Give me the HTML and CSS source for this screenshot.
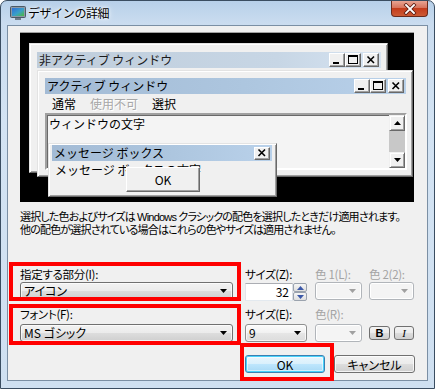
FILE: index.html
```html
<!DOCTYPE html>
<html lang="ja">
<head>
<meta charset="utf-8">
<title>デザインの詳細</title>
<link rel="stylesheet" href="styles.css">
</head>
<body>
<div class="win">
  <div class="titlebar">
    <svg class="appicon" width="16" height="16" viewBox="0 0 16 16">
      <defs><linearGradient id="scr" x1="0" y1="0" x2="1" y2="1"><stop offset="0" stop-color="#2f6fd6"/><stop offset="0.55" stop-color="#3aa0c8"/><stop offset="1" stop-color="#4cbb3c"/></linearGradient></defs>
      <rect x="0.5" y="1.5" width="15" height="11" rx="1" fill="#8c99a6" stroke="#4b5966"/>
      <rect x="2" y="3" width="12" height="8" fill="url(#scr)"/>
      <rect x="5" y="13" width="6" height="2" fill="#6f7c88"/>
    </svg>
    <span class="title">デザインの詳細</span>
    <div class="closebtn">
      <svg width="14" height="12" viewBox="0 0 14 12"><path d="M3 2 L11 10 M11 2 L3 10" stroke="#5a1a10" stroke-width="3.4" stroke-linecap="square"/><path d="M3 2 L11 10 M11 2 L3 10" stroke="#fff" stroke-width="1.8" stroke-linecap="square"/></svg>
    </div>
  </div>
  <div class="client">
    <div class="preview">
      <div class="cw cw-inactive">
        <div class="cap cap-i">
          <span class="captext">非アクティブ ウィンドウ</span>
          <div class="capbtns">
            <div class="cb"><svg width="14" height="12" viewBox="0 0 14 12"><rect x="3" y="8" width="6" height="2"/></svg></div>
            <div class="cb"><svg width="14" height="12" viewBox="0 0 14 12"><rect x="2.5" y="1.5" width="9" height="8" fill="none" stroke="#000"/><rect x="2" y="1" width="10" height="2"/></svg></div>
            <div class="cb cb-x"><svg width="14" height="12" viewBox="0 0 14 12"><path d="M3.5 2.5 L10 9 M10 2.5 L3.5 9" stroke="#000" stroke-width="1.6"/></svg></div>
          </div>
        </div>
      </div>
      <div class="cw cw-active">
        <div class="cap cap-a">
          <span class="captext">アクティブ ウィンドウ</span>
          <div class="capbtns">
            <div class="cb"><svg width="14" height="12" viewBox="0 0 14 12"><rect x="3" y="8" width="6" height="2"/></svg></div>
            <div class="cb"><svg width="14" height="12" viewBox="0 0 14 12"><rect x="2.5" y="1.5" width="9" height="8" fill="none" stroke="#000"/><rect x="2" y="1" width="10" height="2"/></svg></div>
            <div class="cb cb-x"><svg width="14" height="12" viewBox="0 0 14 12"><path d="M3.5 2.5 L10 9 M10 2.5 L3.5 9" stroke="#000" stroke-width="1.6"/></svg></div>
          </div>
        </div>
        <div class="menu">
          <span>通常</span>
          <span class="grayed">使用不可</span>
          <span>選択</span>
        </div>
        <div class="textarea">
          <div class="tatext">ウィンドウの文字</div>
          <div class="sbar">
            <div class="sbtn"><svg width="7" height="4" viewBox="0 0 7 4"><path d="M3.5 0 L7 4 L0 4 Z"/></svg></div>
            <div class="strack"></div>
            <div class="sbtn"><svg width="7" height="4" viewBox="0 0 7 4"><path d="M0 0 L7 0 L3.5 4 Z"/></svg></div>
          </div>
        </div>
      </div>
      <div class="cw msgbox">
        <div class="cap cap-a">
          <span class="captext">メッセージ ボックス</span>
          <div class="capbtns">
            <div class="cb cb-x cb-m"><svg width="14" height="10" viewBox="0 0 14 10"><path d="M3.5 1.5 L10 8 M10 1.5 L3.5 8" stroke="#000" stroke-width="1.6"/></svg></div>
          </div>
        </div>
        <div class="msgbody">
          <div class="msgtext">メッセージ ボックスの文字</div>
          <div class="msgok">OK</div>
        </div>
      </div>
    </div>

    <p class="desc">選択した色およびサイズは Windows クラシックの配色を選択したときだけ適用されます。<br>他の配色が選択されている場合はこれらの色やサイズは適用されません。</p>

    <div class="form">
      <div class="lbl">指定する部分(I):</div>
      <div class="lbl">サイズ(Z):</div>
      <div class="lbl dim">色 1(L):</div>
      <div class="lbl dim">色 2(2):</div>

      <div class="combo wide"><span>アイコン</span><svg class="arr" width="7" height="4" viewBox="0 0 7 4"><path d="M0 0 L7 0 L3.5 4 Z"/></svg></div>
      <div class="spin">
        <div class="spinbox">32</div>
        <div class="spinbtns">
          <div class="sp"><svg width="7" height="4" viewBox="0 0 7 4"><path d="M3.5 0 L7 4 L0 4 Z" fill="#3b58a8"/></svg></div>
          <div class="sp"><svg width="7" height="4" viewBox="0 0 7 4"><path d="M0 0 L7 0 L3.5 4 Z" fill="#3b58a8"/></svg></div>
        </div>
      </div>
      <div class="combo small dis"><span></span><svg class="arr" width="7" height="4" viewBox="0 0 7 4"><path d="M0 0 L7 0 L3.5 4 Z"/></svg></div>
      <div class="combo small2 dis"><span></span><svg class="arr" width="7" height="4" viewBox="0 0 7 4"><path d="M0 0 L7 0 L3.5 4 Z"/></svg></div>

      <div class="lbl lbl2">フォント(F):</div>
      <div class="lbl lbl2">サイズ(E):</div>
      <div class="lbl lbl2 dim">色(R):</div>
      <div class="lbl lbl2"></div>

      <div class="combo wide"><span>MS ゴシック</span><svg class="arr" width="7" height="4" viewBox="0 0 7 4"><path d="M0 0 L7 0 L3.5 4 Z"/></svg></div>
      <div class="combo mid edit"><span>9</span><svg class="arr" width="7" height="4" viewBox="0 0 7 4"><path d="M0 0 L7 0 L3.5 4 Z"/></svg></div>
      <div class="combo small dis"><span></span><svg class="arr" width="7" height="4" viewBox="0 0 7 4"><path d="M0 0 L7 0 L3.5 4 Z"/></svg></div>
      <div class="bi">
        <div class="tb tb-b">B</div>
        <div class="tb tb-i">I</div>
      </div>
    </div>

    <div class="buttons">
      <div class="btn btn-def">OK</div>
      <div class="btn">キャンセル</div>
    </div>
  </div>

  <div class="mark mark1"></div>
  <div class="mark mark2"></div>
  <div class="mark mark3"></div>
</div>
</body>
</html>
```

FILE: styles.css
```css
* { box-sizing: border-box; margin: 0; padding: 0; }

body {
  width: 435px;
  height: 389px;
  overflow: hidden;
  background: #fff;
  font-family: "Noto Sans CJK JP", "Noto Sans", sans-serif;
  font-size: 12px;
  color: #000;
}

.win {
  position: relative;
  width: 435px;
  height: 389px;
  border: 1px solid #3a4d61;
  border-radius: 7px 7px 0 0;
  background: linear-gradient(180deg, #b7d0e9 0, #cadcef 22px, #d3e3f3 120px, #cfe0f1 100%);
  padding: 0 6px 7px 6px;
  display: flex;
  flex-direction: column;
}

.titlebar {
  height: 24px;
  display: flex;
  align-items: center;
  padding-left: 3px;
}

.appicon { flex: none; margin-top: -1px; }

.title {
  margin-left: 2px;
  font-size: 12px;
  line-height: 16px;
  letter-spacing: -0.4px;
  color: #000;
  text-shadow: 0 0 6px #fff, 0 0 3px #fff;
}

.closebtn {
  position: absolute;
  top: 0;
  right: 6px;
  width: 37px;
  height: 16px;
  border: 1px solid #6a2a1c;
  border-top: none;
  border-radius: 0 0 4px 4px;
  background: linear-gradient(180deg, #e8a493 0, #d7735c 45%, #c43c1c 50%, #cc5a34 100%);
  display: flex;
  align-items: center;
  justify-content: center;
}

.client {
  flex: 1;
  background: #f0f0f0;
  border: 1px solid #7b8fa4;
  padding: 7px 12px 0 12px;
}

/* preview */
.preview {
  position: relative;
  width: 394px;
  height: 169px;
  background: #000;
  box-shadow: 0 -1px 0 #a0a0a0;
}

.cw {
  position: absolute;
  background: #f0f0f0;
  border: 1px solid;
  border-color: #e3e3e3 #696969 #696969 #e3e3e3;
  box-shadow: inset 1px 1px 0 #fff, inset -1px -1px 0 #a0a0a0;
  padding: 7px 6px 6px 7px;
}

.cw-inactive { left: 9px; top: 10px; width: 359px; height: 130px; padding-top: 8px; }
.cw-active { left: 17px; top: 37px; width: 376px; height: 107px; display: flex; flex-direction: column; }
.msgbox { left: 28px; top: 110px; width: 229px; height: 54px; padding: 1px 4px 0 3px; display: flex; flex-direction: column; }

.cap {
  height: 16px;
  flex: none;
  display: flex;
  align-items: center;
  padding-left: 2px;
  font-size: 12px;
  line-height: 16px;
}
.cap-i { background: linear-gradient(90deg, #bfcddb 0, #c7d6e5 70%, #d7e4f2 100%); color: #1a1a1a; }
.cap-a { background: linear-gradient(90deg, #a3bbd5 0, #adc6df 55%, #b9d1ea 100%); }

.captext { white-space: nowrap; }

.capbtns {
  margin-left: auto;
  margin-right: 2px;
  display: flex;
}
.cb {
  width: 16px;
  height: 14px;
  background: #f0f0f0;
  border: 1px solid;
  border-color: #fff #696969 #696969 #fff;
  box-shadow: inset -1px -1px 0 #a0a0a0;
  display: flex;
  align-items: center;
  justify-content: center;
}
.cb svg { fill: #000; }
.cb-x { margin-left: 2px; }
.cb-m { height: 13px; margin-left: 0; }

.menu {
  height: 19px;
  display: flex;
  align-items: center;
  gap: 14px;
  padding-left: 7px;
  font-size: 12px;
}
.grayed { color: #a7a7a7; text-shadow: 1px 1px 0 #fff; }

.textarea {
  flex: 1;
  display: flex;
  background: #f4f4f4;
  border: 2px solid;
  border-color: #a0a0a0 #fff #fff #a0a0a0;
  box-shadow: inset 1px 1px 0 #696969;
  margin-right: -1px;
}
.tatext { flex: 1; padding: 1px 0 0 2px; line-height: 16px; }

.sbar {
  width: 16px;
  display: flex;
  flex-direction: column;
}
.sbtn {
  height: 16px;
  background: #f0f0f0;
  border: 1px solid;
  border-color: #f0f0f0 #696969 #696969 #f0f0f0;
  box-shadow: inset 1px 1px 0 #fff, inset -1px -1px 0 #a0a0a0;
  display: flex;
  align-items: center;
  justify-content: center;
}
.sbtn svg { fill: #000; }
.strack { flex: 1; background: #c8c8c8; }

.msgbody { position: relative; flex: 1; }
.msgtext { padding: 2px 0 0 3px; line-height: 13px; white-space: nowrap; }
.msgok {
  position: absolute;
  left: 74px;
  top: 6px;
  width: 74px;
  height: 25px;
  background: #f0f0f0;
  border: 1px solid;
  border-color: #fff #696969 #696969 #fff;
  box-shadow: inset -1px -1px 0 #a0a0a0;
  display: flex;
  align-items: center;
  justify-content: center;
  font-size: 12px;
}

/* description */
.desc {
  margin-top: 9px;
  font-family: "Liberation Sans", "Noto Sans CJK JP", sans-serif;
  font-size: 11px;
  line-height: 12.5px;
  letter-spacing: -0.8px;
  font-feature-settings: "palt" 1;
  white-space: nowrap;
  color: #000;
}

/* form */
.form {
  margin-top: 30px;
  display: grid;
  grid-template-columns: 225px 70px 54px 45px;
  grid-template-rows: 16px 18px 24px 18px;
}
.lbl {
  align-self: end;
  font-size: 11.5px;
  line-height: 14px;
  font-feature-settings: "palt" 1;
  letter-spacing: -0.3px;
  white-space: nowrap;
  padding-bottom: 1px;
}
.lbl2 { padding-bottom: 3px; }
.dim { color: #a3a3a3; }

.combo {
  height: 18px;
  border: 1px solid #707070;
  border-radius: 3px;
  background: linear-gradient(180deg, #f2f2f2 0, #ebebeb 50%, #dddddd 51%, #cfcfcf 100%);
  box-shadow: inset 0 0 0 1px rgba(255,255,255,0.7);
  display: flex;
  align-items: center;
  padding: 0 5px 0 3px;
  font-size: 12px;
  font-feature-settings: "palt" 1;
  white-space: nowrap;
}
.combo span { flex: 1; line-height: 14px; }
.combo .arr { flex: none; fill: #000; }
.wide { width: 213px; }
.mid { width: 62px; }
.small { width: 47px; }
.small2 { width: 45px; }
.dis {
  border-color: #b1b5ba;
  background: #f4f4f4;
  box-shadow: inset 0 0 0 1px #fff;
}
.dis .arr { fill: #a0a0a0; }
.edit {
  border-color: #8e8f8f;
  background: linear-gradient(180deg, #fbfbfb 0, #f1f1f1 50%, #e6e6e6 51%, #dcdcdc 100%);
}

.spin { display: flex; width: 62px; height: 18px; margin-top: 1px; }
.spinbox {
  width: 48px;
  border: 1px solid;
  border-color: #abadb3 #dbdfe6 #e3e9ef #e2e3ea;
  background: #fff;
  text-align: right;
  padding-right: 3px;
  line-height: 15px;
  font-size: 12px;
}
.spinbtns { width: 14px; display: flex; flex-direction: column; margin-left: 0; }
.sp {
  flex: 1;
  border: 1px solid #9ba3ae;
  border-radius: 2px;
  background: linear-gradient(180deg, #f6f6f6, #dedede);
  display: flex;
  align-items: center;
  justify-content: center;
}

.bi { display: flex; gap: 4px; align-items: center; }
.tb {
  width: 21px;
  height: 14px;
  border: 1px solid #707070;
  border-radius: 3px;
  background: linear-gradient(180deg, #f2f2f2 0, #ebebeb 50%, #dddddd 51%, #cfcfcf 100%);
  display: flex;
  align-items: center;
  justify-content: center;
  font-family: "Liberation Sans", Arial, sans-serif;
  font-size: 11px;
  line-height: 12px;
}
.tb-b { font-weight: bold; }
.tb-i { width: 20px; font-style: italic; font-family: "Liberation Serif", serif; }

.buttons {
  margin-top: 13px;
  display: flex;
  justify-content: flex-end;
  gap: 9px;
}
.btn {
  width: 81px;
  height: 18px;
  border: 1px solid #707070;
  border-radius: 3px;
  background: linear-gradient(180deg, #f2f2f2 0, #ebebeb 50%, #dddddd 51%, #cfcfcf 100%);
  box-shadow: inset 0 0 0 1px rgba(255,255,255,0.75);
  display: flex;
  align-items: center;
  justify-content: center;
  font-size: 12px;
  font-feature-settings: "palt" 1;
}
.btn-def {
  width: 80px;
  border-color: #3c7fb1;
  background: linear-gradient(180deg, #eaf6fd 0, #d9f0fc 50%, #bee6fd 51%, #a7d9f5 100%);
  box-shadow: inset 0 0 0 1px #48d2fb, inset 0 0 0 2px rgba(255,255,255,0.5);
}

/* red annotation frames */
.mark {
  position: absolute;
  border: 4px solid #ff0000;
}
.mark1 { left: 8px; top: 261px; width: 232px; height: 39px; }
.mark2 { left: 8px; top: 303px; width: 232px; height: 41px; }
.mark3 { left: 239px; top: 342px; width: 94px; height: 38px; }
```
